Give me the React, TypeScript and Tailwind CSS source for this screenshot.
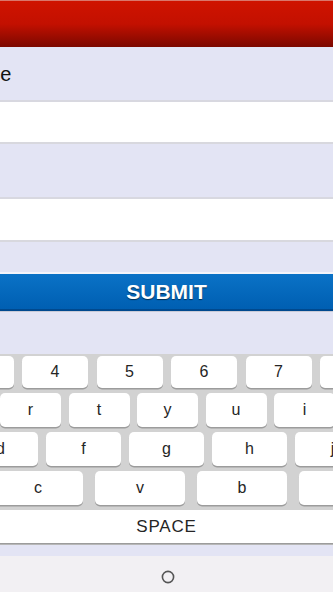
const numberRow = ['3', '4', '5', '6', '7', '8']
const topRow = ['r', 't', 'y', 'u', 'i']
const homeRow = ['d', 'f', 'g', 'h', 'j']
const bottomRow = ['x', 'c', 'v', 'b', 'n']

function Key({ label, className }: { label: string; className: string }) {
  return (
    <div
      className={`flex shrink-0 items-center justify-center rounded-[5px] bg-white text-[#252525] shadow-[0_1.5px_0_#9c9c9c] ${className}`}
    >
      {label}
    </div>
  )
}

export default function App() {
  return (
    <div className="flex h-[592px] w-[333px] flex-col overflow-hidden bg-[#e3e4f4] font-['Liberation_Sans',Arial,sans-serif]">
      <header className="h-[47px] shrink-0 border-t border-[#d9766c] bg-gradient-to-b from-[#cf1300] via-[#c31000] to-[#7c0800]" />

      <div className="flex h-[55px] shrink-0 items-center overflow-hidden border-b-2 border-[#d8d8e0] bg-[#e3e4f4]">
        <span className="ml-[-42px] text-[20px] text-[#111]">Name</span>
      </div>
      <div className="h-[42px] shrink-0 border-b-2 border-[#d8d8de] bg-white" />
      <div className="h-[55px] shrink-0 border-b-2 border-[#d8d8e0] bg-[#e3e4f4]" />
      <div className="h-[43px] shrink-0 border-b-2 border-[#d8d8de] bg-white" />
      <div className="h-[32px] shrink-0 border-b-2 border-[#f4f4fa] bg-[#e3e4f4]" />

      <button className="flex h-[37px] shrink-0 items-center justify-center border-b-2 border-[#00498e] bg-gradient-to-b from-[#0b72c6] to-[#005fb2] text-[21px] font-bold text-white [text-shadow:0_1px_1px_rgba(0,0,0,0.55)]">
        SUBMIT
      </button>
      <div className="h-[43px] shrink-0 border-t border-[#c9cad6] bg-[#e3e4f4]" />

      <div className="flex h-[191px] shrink-0 flex-col gap-[5px] bg-[#d2d2d2] pt-[2px]">
        <div className="ml-[-52.5px] flex gap-[8.5px]">
          {numberRow.map((k) => (
            <Key key={k} label={k} className="h-[32px] w-[66px] text-[16px]" />
          ))}
        </div>
        <div className="flex gap-[7.5px]">
          {topRow.map((k) => (
            <Key key={k} label={k} className="h-[34px] w-[61px] text-[16px]" />
          ))}
        </div>
        <div className="ml-[-37px] flex gap-[8px]">
          {homeRow.map((k) => (
            <Key key={k} label={k} className="h-[34px] w-[75px] text-[16px]" />
          ))}
        </div>
        <div className="ml-[-109px] flex gap-[12px]">
          {bottomRow.map((k) => (
            <Key key={k} label={k} className="h-[34px] w-[90px] text-[16px]" />
          ))}
        </div>
        <div className="flex">
          <Key label="SPACE" className="h-[33px] w-[333px] rounded-none text-[17px] tracking-[0.05em]" />
        </div>
      </div>

      <div className="h-[11px] shrink-0 bg-[#e3e4f4]" />
      <nav className="flex flex-1 items-center justify-center bg-[#f2f0f3] pt-[5px]">
        <svg width="14" height="14" viewBox="0 0 14 14" className="ml-[2px]">
          <circle cx="7" cy="7" r="5.6" fill="none" stroke="#555" strokeWidth="1.6" />
        </svg>
      </nav>
    </div>
  )
}
